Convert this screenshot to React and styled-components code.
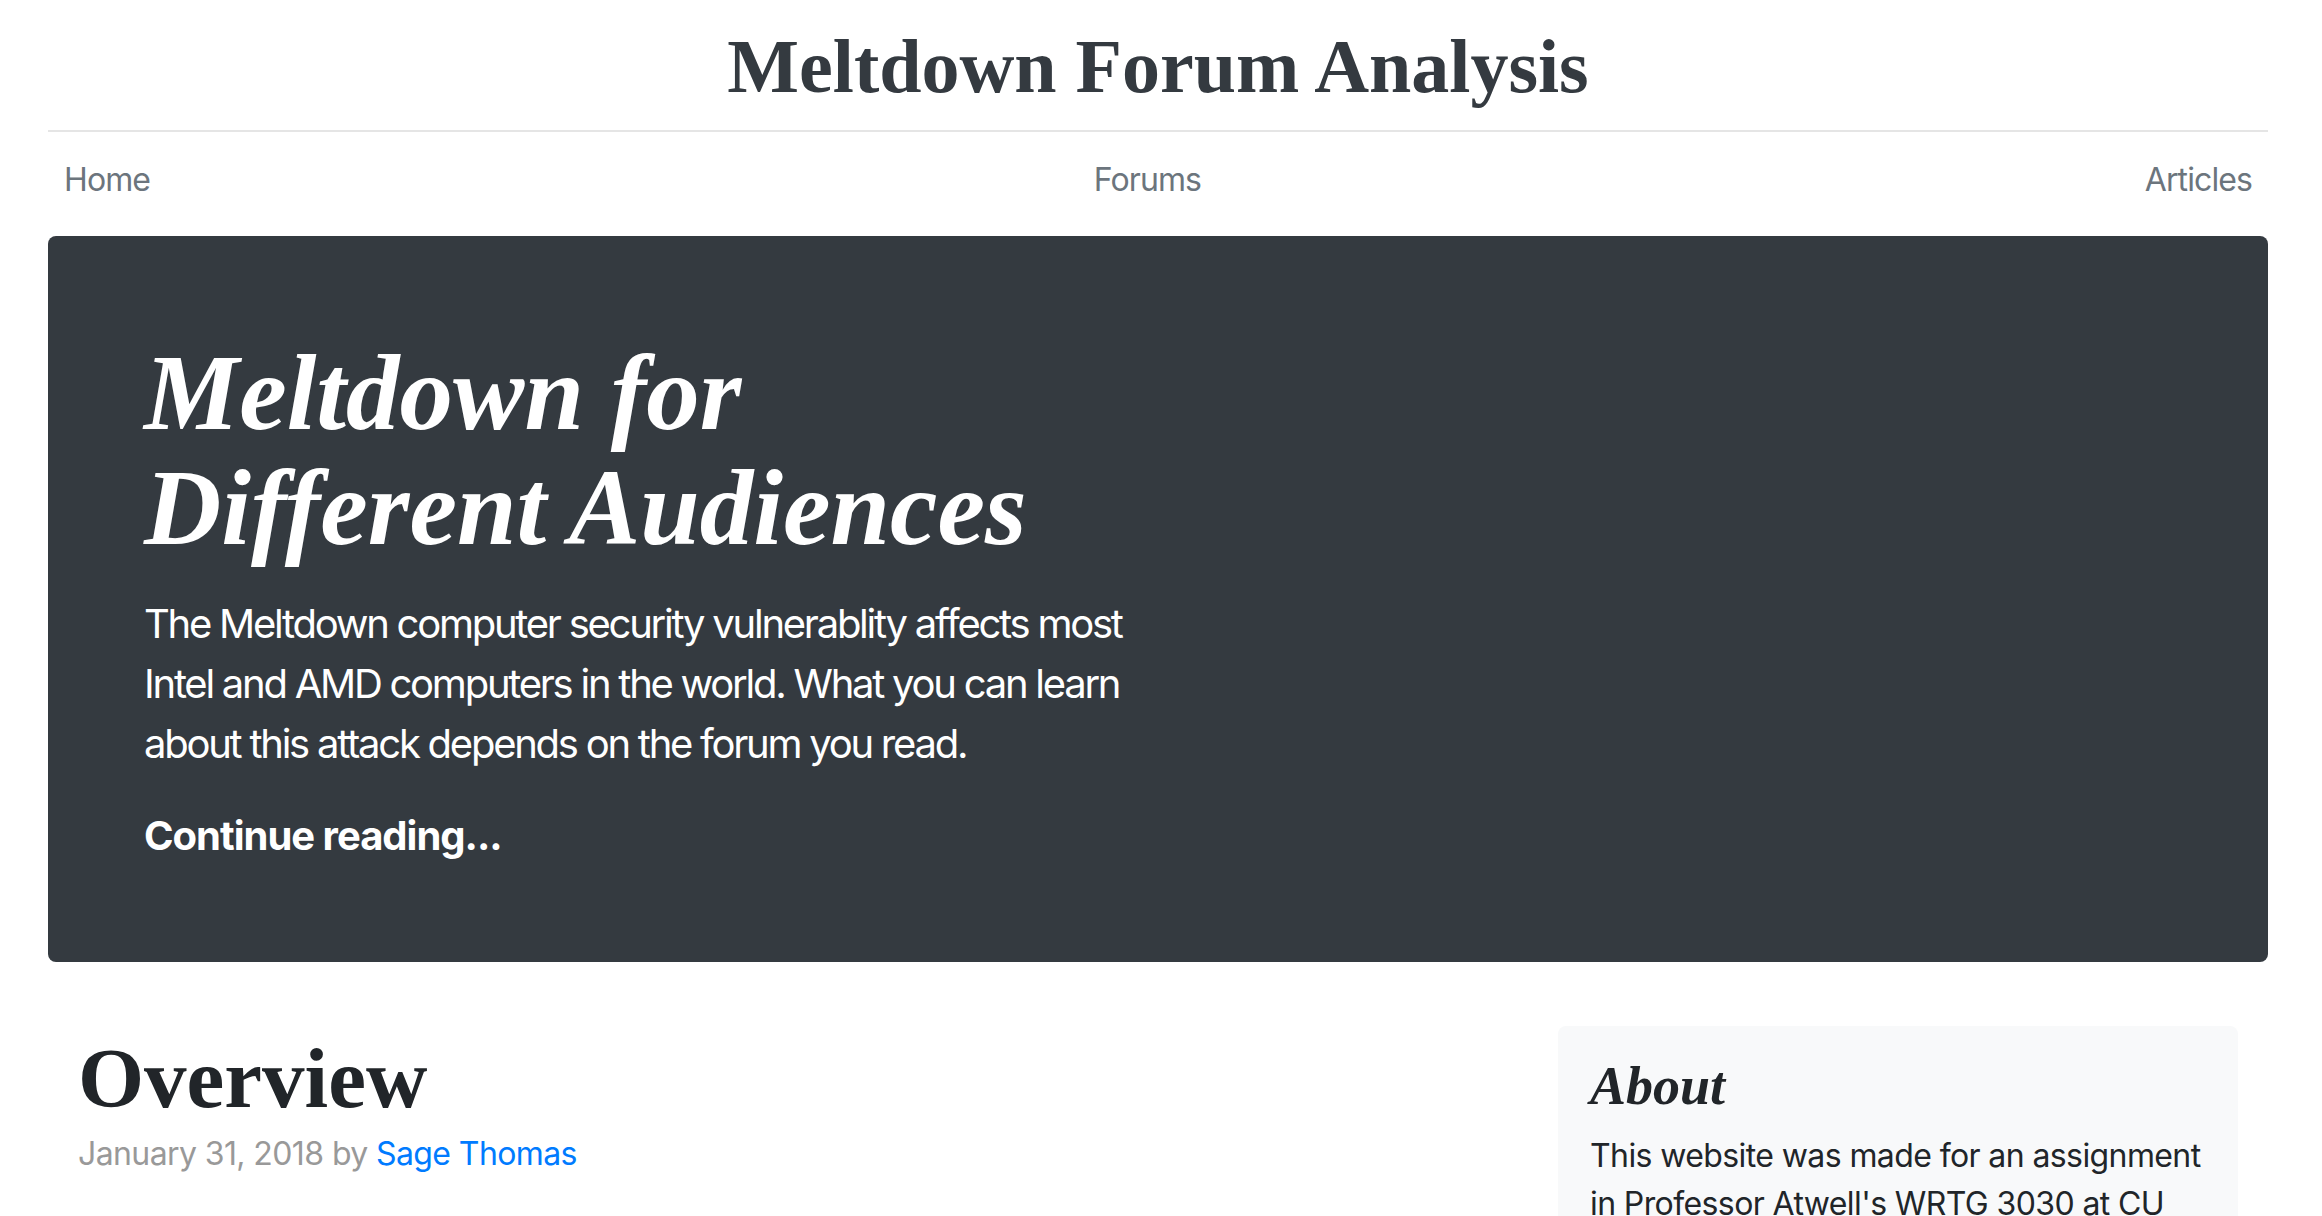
import React from "react";
import styled, { createGlobalStyle } from "styled-components";

const GlobalStyle = createGlobalStyle`
  body {
    margin: 0;
    background: #ffffff;
    color: #212529;
    font-family: Inter, "Liberation Sans", sans-serif;
    letter-spacing: -0.6px;
  }
`;

const serif = `"Liberation Serif", "DejaVu Serif", serif`;

const Container = styled.div`
  width: 2220px;
  margin-left: 48px;
`;

const Header = styled.header`
  padding: 30px 0 28px;
  border-bottom: 2px solid #e5e5e5;
  text-align: center;
`;

const Logo = styled.a`
  font-family: ${serif};
  font-weight: 700;
  font-size: 76px;
  line-height: 72px;
  letter-spacing: 0;
  color: #343a40;
  text-decoration: none;
`;

const Nav = styled.nav`
  height: 88px;
  box-sizing: border-box;
  padding: 8px 0;
  margin-bottom: 16px;
  display: flex;
  justify-content: space-between;
`;

const NavLink = styled.a`
  padding: 16px;
  font-size: 32px;
  line-height: 48px;
  letter-spacing: -0.9px;
  color: #6c757d;
  text-decoration: none;
`;

const Jumbotron = styled.section`
  background: #343a40;
  color: #ffffff;
  border-radius: 8px;
  padding: 96px;
  margin-bottom: 64px;
`;

const Feature = styled.div`
  width: 1014px;
`;

const HeroTitle = styled.h1`
  font-family: ${serif};
  font-style: italic;
  font-weight: 700;
  font-size: 107px;
  line-height: 115.2px;
  letter-spacing: 0;
  margin: 0;
  padding-top: 4px;
`;

const Lead = styled.p`
  font-size: 40px;
  line-height: 60px;
  letter-spacing: -2.25px;
  white-space: nowrap;
  margin: ${(p) => (p.last ? "0" : "28px 0 32px")};
`;

const ReadMore = styled.a`
  color: #ffffff;
  font-weight: 700;
  letter-spacing: -1px;
  text-decoration: none;
`;

const Main = styled.main`
  display: flex;
`;

const Post = styled.article`
  width: 1480px;
  box-sizing: border-box;
  padding: 0 30px;
`;

const PostTitle = styled.h2`
  font-family: ${serif};
  font-weight: 700;
  font-size: 85px;
  line-height: 96px;
  letter-spacing: 0;
  margin: 0 0 4px;
  padding-top: 4px;
  color: #212529;
`;

const Meta = styled.p`
  font-size: 32px;
  line-height: 48px;
  color: #999999;
  margin: 0 0 40px;

  a {
    color: #007bff;
    text-decoration: none;
  }
`;

const Sidebar = styled.aside`
  width: 740px;
  box-sizing: border-box;
  padding: 0 30px;
`;

const Box = styled.div`
  background: #f8f9fa;
  border-radius: 8px;
  padding: 32px;
`;

const BoxTitle = styled.h4`
  font-family: ${serif};
  font-style: italic;
  font-weight: 700;
  font-size: 54px;
  line-height: 57.6px;
  letter-spacing: 0;
  margin: 0 0 16px;
  color: #212529;
`;

const BoxText = styled.p`
  font-size: 32px;
  line-height: 48px;
  margin: 0;
`;

export default function App() {
  return (
    <>
      <GlobalStyle />
      <Container>
        <Header>
          <Logo href="#">Meltdown Forum Analysis</Logo>
        </Header>

        <Nav>
          <NavLink href="#">Home</NavLink>
          <NavLink href="#">Forums</NavLink>
          <NavLink href="#">Articles</NavLink>
        </Nav>

        <Jumbotron>
          <Feature>
            <HeroTitle>
              Meltdown for
              <br />
              Different Audiences
            </HeroTitle>
            <Lead>
              The Meltdown computer security vulnerablity affects most
              <br />
              Intel and AMD computers in the world. What you can learn
              <br />
              about this attack depends on the forum you read.
            </Lead>
            <Lead last>
              <ReadMore href="#">Continue reading...</ReadMore>
            </Lead>
          </Feature>
        </Jumbotron>

        <Main>
          <Post>
            <PostTitle>Overview</PostTitle>
            <Meta>
              January 31, 2018 by <a href="#">Sage Thomas</a>
            </Meta>
          </Post>
          <Sidebar>
            <Box>
              <BoxTitle>About</BoxTitle>
              <BoxText>
                This website was made for an assignment
                <br />
                in Professor Atwell's WRTG 3030 at CU
                <br />
                Boulder.
              </BoxText>
            </Box>
          </Sidebar>
        </Main>
      </Container>
    </>
  );
}
